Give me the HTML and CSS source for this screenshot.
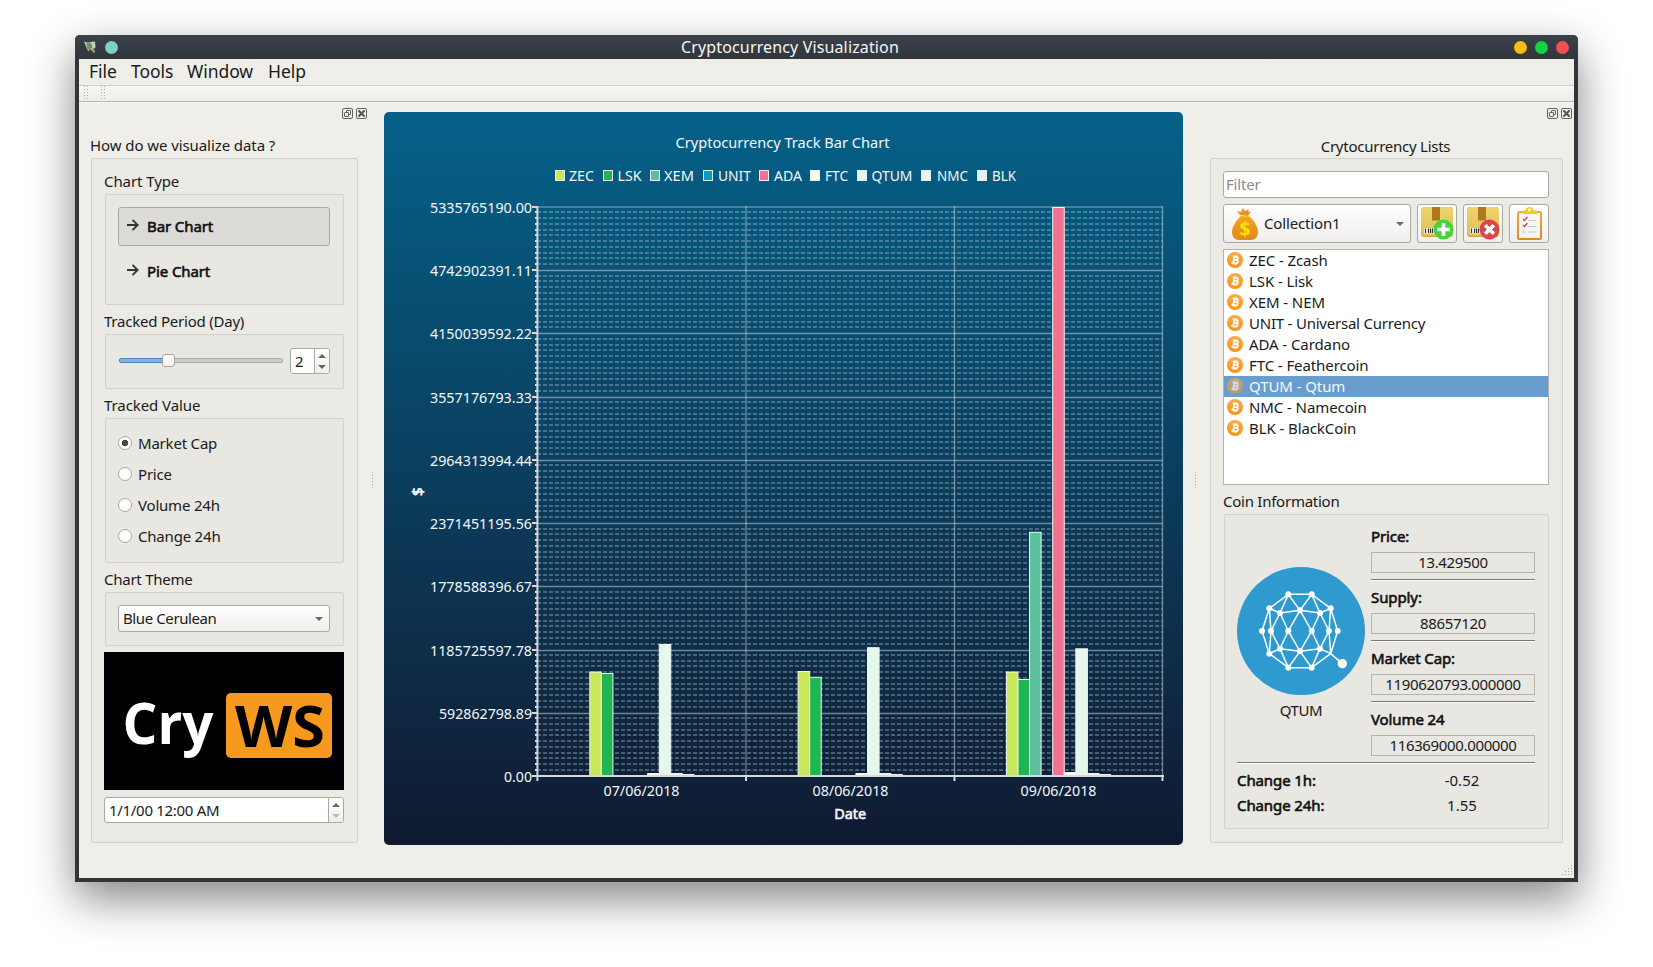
FILE: index.html
```html
<!DOCTYPE html>
<html lang="en">
<head>
<meta charset="utf-8">
<title>Cryptocurrency Visualization</title>
<link rel="stylesheet" href="styles.css">
</head>
<body>
<svg class="defs" width="0" height="0">
  <defs>
    <linearGradient id="coinFill" x1="0" y1="0" x2="0" y2="1"><stop offset="0" stop-color="#f9aa4b"/><stop offset="1" stop-color="#f7931a"/></linearGradient>
    <linearGradient id="boxFill" x1="0" y1="0" x2="0" y2="1"><stop offset="0" stop-color="#efd56f"/><stop offset="1" stop-color="#dfbe4f"/></linearGradient>
    <linearGradient id="bagFill" x1="0" y1="0" x2="0" y2="1"><stop offset="0" stop-color="#f6a326"/><stop offset="1" stop-color="#dd8b1a"/></linearGradient>
    <linearGradient id="boardFill" x1="0" y1="0" x2="0" y2="1"><stop offset="0" stop-color="#f5a93c"/><stop offset="1" stop-color="#dd8a1c"/></linearGradient>
    <symbol id="coin" viewBox="0 0 16 16">
      <circle cx="8" cy="8" r="8" fill="url(#coinFill)"/>
      <g transform="rotate(12 8 8)" fill="none" stroke="#fff" stroke-width="1.8"><path d="M5 4.8h4a1.5 1.5 0 0 1 0 3H6.8M6.8 4.8v6.400M5 11.200h4.400a1.700 1.700 0 0 0 0-3.400"/><path stroke-width="1" d="M7.300 3v1.600M9.200 3v1.600M7.300 11.400v1.600M9.200 11.400v1.600"/></g>
    </symbol>
    <symbol id="package" viewBox="0 0 32 32">
      <rect width="32" height="30" rx="3.5" fill="#c9a53c"/><rect width="32" height="29" rx="3.5" fill="url(#boxFill)"/>
      <path d="M11 0h8v14l-1.300-1-1.300 1-1.300-1-1.300 1-1.400-1-1.400 1z" fill="#b0781c"/>
      <rect x="3" y="21" width="12" height="5.500" fill="#fff" opacity=".85"/>
      <path d="M4.500 21.500v4.500M7.500 21.500v4.500M9.500 21.500v4.500M11.500 21.500v4.500" stroke="#333" stroke-width="1.200"/>
    </symbol>
    <symbol id="floatDock" viewBox="0 0 11 11"><rect x=".5" y=".5" width="10" height="10" rx="1.500" fill="none" stroke="#64645f"/><rect x="4.500" y="2.500" width="4" height="4" rx=".5" fill="none" stroke="#64645f"/><rect x="2.500" y="4.500" width="4" height="4" rx=".5" fill="#efeee9" stroke="#64645f"/></symbol>
    <symbol id="closeDock" viewBox="0 0 11 11"><rect x=".5" y=".5" width="10" height="10" rx="1.500" fill="none" stroke="#64645f"/><path d="M2.500 2.500l6 6M8.500 2.500l-6 6" stroke="#55554f" stroke-width="2"/></symbol>
    <symbol id="arrow" viewBox="0 0 12 12"><path d="M0 6h11M5.500 .8l5.200 5.200-5.200 5.200" fill="none" stroke="#31363b" stroke-width="1.900"/></symbol>
  </defs>
</svg>

<div class="window">
  <header class="titlebar">
    <div class="title-left">
      <svg width="12" height="12" viewBox="0 0 12 12"><path d="M0 .5l3 1 3-.5 5-.5.500 6-1.500 1 1 3.500-2-1-2-2-3 2z" fill="#c9cdbf"/><path d="M2.500 2l3.500-1 2 4-2 4-2.500-1z" fill="#5f9a6a"/><path d="M6.500 3l1.500 4M9 7l1 3.500" stroke="#6d6d60" stroke-width="1"/><path d="M7 8.500l2 1.500 1.500 1.500" stroke="#d98a3c" stroke-width="1.500"/></svg>
      <i class="dot teal"></i>
    </div>
    <span class="title">Cryptocurrency Visualization</span>
    <div class="title-right"><i class="dot amber"></i><i class="dot green"></i><i class="dot red"></i></div>
  </header>
  <nav class="menu"><span>File</span><span>Tools</span><span>Window</span><span>Help</span></nav>
  <div class="toolbar"><i class="grip"></i><i class="grip"></i></div>

  <main class="main">
    <section class="left">
      <div class="dock"><svg width="11" height="11"><use href="#floatDock"/></svg><svg width="11" height="11"><use href="#closeDock"/></svg></div>
      <div class="label head">How do we visualize data ?</div>
      <div class="group outer">
        <div class="label">Chart Type</div>
        <div class="group inner type-box">
          <button class="choice active"><svg width="12" height="12"><use href="#arrow"/></svg><span>Bar Chart</span></button>
          <button class="choice"><svg width="12" height="12"><use href="#arrow"/></svg><span>Pie Chart</span></button>
        </div>
        <div class="label period-label">Tracked Period (Day)</div>
        <div class="group inner period-box">
          <div class="slider"><i class="fill"></i><i class="handle"></i><i class="rest"></i></div>
          <div class="spin small"><span>2</span><div class="steps"><i class="up"></i><i class="down"></i></div></div>
        </div>
        <div class="label">Tracked Value</div>
        <div class="group inner value-box">
          <div class="radio on"><i></i>Market Cap</div>
          <div class="radio"><i></i>Price</div>
          <div class="radio"><i></i>Volume 24h</div>
          <div class="radio"><i></i>Change 24h</div>
        </div>
        <div class="label theme-label">Chart Theme</div>
        <div class="group inner theme-box"><div class="combo"><span>Blue Cerulean</span><i class="down"></i></div></div>
        <div class="brand"><svg width="240" height="138"><text class="brand-text" x="18.500" y="92" fill="#fff" textLength="91" lengthAdjust="spacingAndGlyphs">Cry</text><rect x="122" y="41" width="106" height="65" rx="5" fill="#f7981f"/><text class="brand-text" x="131" y="95" textLength="90" lengthAdjust="spacingAndGlyphs">WS</text></svg></div>
        <div class="spin date"><span>1/1/00 12:00 AM</span><div class="steps"><i class="up"></i><i class="down off"></i></div></div>
      </div>
      <i class="split"></i>
    </section>

    <section class="chart"><svg id="chart" width="799" height="733" viewBox="384 112 799 733"></svg></section>

    <section class="right">
      <div class="dock"><svg width="11" height="11"><use href="#floatDock"/></svg><svg width="11" height="11"><use href="#closeDock"/></svg></div>
      <div class="label list-head">Crytocurrency Lists</div>
      <div class="group outer">
        <div class="filter">Filter</div>
        <div class="actions">
          <div class="combo collection">
            <svg width="26" height="32" viewBox="0 0 26 32"><path d="M8 7L5 3l4 1 2-4 2 3 4-2-1 3 3-1-3 5z" fill="#e8912a"/><path d="M9 8h8c5 4 9 11 9 16 0 5-3 8-7 8H7c-4 0-7-3-7-8 0-5 4-12 9-16z" fill="url(#bagFill)"/><path d="M8 8.500h9" stroke="#f9c12c" stroke-width="1.500"/><text class="bag-sign" x="13" y="27.500" text-anchor="middle">$</text></svg>
            <span>Collection1</span><i class="down"></i>
          </div>
          <button class="tool"><svg width="33" height="33" viewBox="0 0 33 33"><use href="#package" width="32" height="32"/><circle cx="22.500" cy="22.500" r="10" fill="#45d33b"/><path d="M22.500 16v13M16 22.500h13" stroke="#fff" stroke-width="3.600"/></svg></button>
          <button class="tool"><svg width="33" height="33" viewBox="0 0 33 33"><use href="#package" width="32" height="32"/><circle cx="22.500" cy="22.500" r="10" fill="#e2434b"/><path d="M18.200 18.200l8.600 8.600M26.800 18.200l-8.600 8.600" stroke="#fff" stroke-width="3.600"/></svg></button>
          <button class="tool"><svg width="25" height="33" viewBox="0 0 25 33"><rect x="0" y="4" width="25" height="29" rx="2.500" fill="url(#boardFill)"/><rect x="2" y="6" width="21" height="25" fill="#f6f6f6"/><path d="M5 7q0-4 4-4a3.500 3 0 0 1 7 0q4 0 4 4z" fill="#f7cb15"/><circle cx="12.500" cy="3" r="1.400" fill="#fff"/><g fill="none"><path d="M6 12l1.500 1.500 3-3.500M6 18l1.500 1.500 3-3.500" stroke="#e23b45" stroke-width="1.300"/><path d="M11 13.500h8.500M11 19.500h8.500M11 25h8.500" stroke="#c8c8c8" stroke-width="1.200"/><rect x="6" y="24" width="2" height="2" stroke="#ccc" stroke-width=".8"/></g></svg></button>
        </div>
        <ul class="coins">
          <li><svg width="16" height="16"><use href="#coin"/></svg><span>ZEC - Zcash</span></li>
          <li><svg width="16" height="16"><use href="#coin"/></svg><span>LSK - Lisk</span></li>
          <li><svg width="16" height="16"><use href="#coin"/></svg><span>XEM - NEM</span></li>
          <li><svg width="16" height="16"><use href="#coin"/></svg><span class="long">UNIT - Universal Currency</span></li>
          <li><svg width="16" height="16"><use href="#coin"/></svg><span>ADA - Cardano</span></li>
          <li><svg width="16" height="16"><use href="#coin"/></svg><span>FTC - Feathercoin</span></li>
          <li class="sel"><svg width="16" height="16"><use href="#coin"/></svg><span>QTUM - Qtum</span></li>
          <li><svg width="16" height="16"><use href="#coin"/></svg><span>NMC - Namecoin</span></li>
          <li><svg width="16" height="16"><use href="#coin"/></svg><span>BLK - BlackCoin</span></li>
        </ul>
        <div class="label info-label">Coin Information</div>
        <div class="group inner info">
          <div class="info-top">
            <div class="logo">
              <svg width="128" height="128" viewBox="0 0 384 384">
                <circle cx="192" cy="192" r="192" fill="#2e9ad0"/>
                <g fill="none" stroke="#fff" stroke-width="4.500" stroke-linejoin="round">
                  <path d="M281 260l-57 42h-70l-57-42-22-68 22-68 57-42h70l57 42 21 68-21 68"/>
                  <path d="M97 124l32 14 60-8 60 8 32-14M97 260l32-15 60 8 60-8 32 15M97 124l5 68-5 68M281 124l-5 68 5 68"/>
                  <path d="M154 82l-25 56 25 54-25 53 25 57 35-49 35 49 25-57-25-53 25-54-25-56-35 48z"/>
                  <path d="M189 130l-35 62 35 61 35-61zM129 138l-27 54 27 53M249 138l27 54-27 53M281 260l35 30"/>
                </g>
                <g fill="#fff"><circle cx="154" cy="82" r="9"/><circle cx="224" cy="82" r="9"/><circle cx="97" cy="124" r="9"/><circle cx="281" cy="124" r="9"/><circle cx="129" cy="138" r="9"/><circle cx="189" cy="130" r="9"/><circle cx="249" cy="138" r="9"/><circle cx="75" cy="192" r="9"/><circle cx="102" cy="192" r="9"/><circle cx="154" cy="192" r="9"/><circle cx="224" cy="192" r="9"/><circle cx="276" cy="192" r="9"/><circle cx="302" cy="192" r="9"/><circle cx="97" cy="260" r="9"/><circle cx="129" cy="245" r="9"/><circle cx="189" cy="253" r="9"/><circle cx="249" cy="245" r="9"/><circle cx="154" cy="302" r="9"/><circle cx="224" cy="302" r="9"/><circle cx="316" cy="290" r="14"/></g>
              </svg>
              <span>QTUM</span>
            </div>
            <div class="facts">
              <b>Price:</b><div class="field">13.429500</div><hr>
              <b>Supply:</b><div class="field">88657120</div><hr>
              <b>Market Cap:</b><div class="field">1190620793.000000</div><hr>
              <b>Volume 24</b><div class="field">116369000.000000</div>
            </div>
          </div>
          <hr>
          <div class="change"><b>Change 1h:</b><span>-0.52</span></div>
          <div class="change"><b>Change 24h:</b><span>1.55</span></div>
        </div>
      </div>
      <i class="split"></i>
      <svg class="resize" width="12" height="12"><path d="M10 .5h1M7 3.500h1M10 3.500h1M4 6.500h1M7 6.500h1M10 6.500h1M1 9.500h1M4 9.500h1M7 9.500h1M10 9.500h1" stroke="#a9a9a5"/></svg>
    </section>
  </main>
</div>
<script src="chart.js"></script>
</body>
</html>
```
FILE: styles.css
```css
* { box-sizing: border-box; }
body { margin: 0; padding: 35px 75px; height: 967px; overflow: hidden; background: #fff; font: 15px/20px "Noto Sans", sans-serif; color: #1a1a1a; }
.defs { position: absolute; }
svg { display: block; flex: none; }
button { font: inherit; color: inherit; }

.window { width: 1503px; height: 847px; padding: 0 4px 4px; background: #31363b; border-radius: 5px 5px 0 0; box-shadow: 0 17px 45px rgba(0,0,0,.48); }
.titlebar { height: 24px; margin: 0 -4px; padding: 0 9px; display: flex; justify-content: space-between; align-items: center; background: linear-gradient(#3a4149, #31363b); border-radius: 5px 5px 0 0; color: #f5f5f5; }
.title { flex: 1; padding-right: 52px; text-align: center; font-size: 16px; letter-spacing: .14px; }
.title-left { display: flex; gap: 9px; align-items: center; }
.title-right { display: flex; gap: 8px; justify-content: flex-end; }
.dot { width: 13px; height: 13px; border-radius: 50%; }
.teal { background: #7ecfc8; }
.amber { background: #fdbc0b; }
.green { background: #14d140; }
.red { background: #f45056; }

.menu { height: 26px; padding-left: 10px; background: #efeee9; display: grid; grid-template-columns: 42px 56px 81px auto; justify-content: start; font-size: 17.5px; line-height: 25px; letter-spacing: -.05px; }
.toolbar { height: 17px; padding: 0 5px; display: flex; gap: 13px; background: linear-gradient(#f8f7f3, #edece7); border-top: 1px solid #cfcecb; border-bottom: 1px solid #b5b4b0; box-shadow: 0 1px #f8f8f4; position: relative; }
.grip { width: 4px; height: 15px; background-image: radial-gradient(circle at .5px .5px, #b0b0ac .7px, transparent .8px); background-size: 3px 3px; }
.main { height: 776px; padding-top: 1px; display: grid; grid-template-columns: 305px 799px 391px; background: #efeee9; }
.left { position: relative; padding: 5px 26px 0 12px; }
.right { position: relative; padding: 5px 11px 0 27px; }
.dock { display: flex; gap: 3px; justify-content: flex-end; margin-bottom: 16px; }
.left .dock { margin-right: -9px; }
.right .dock { margin: 0 -9px 17px 0; }
.label { height: 20px; margin-bottom: 3px; white-space: nowrap; letter-spacing: -.08px; }
.head { margin-left: -1px; }
.period-label { letter-spacing: -.22px; }
.theme-label, .info-label, .list-head { letter-spacing: -.25px; }
.list-head { text-align: center; margin: 0 2px 2px 0; }
.group { border: 1px solid #d2d1cc; border-radius: 2px; box-shadow: inset 0 0 1px rgba(0,0,0,.08); }
.outer { height: 685px; padding: 12px 13px 12px 12px; background: #ebeae5; }
.inner { margin: 0 0 6px 1px; padding: 12px; background: #e8e7e2; }
.type-box { height: 111px; }
.choice { width: 212px; height: 39px; padding: 0 8px; display: flex; gap: 8px; align-items: center; border: 1px solid transparent; border-radius: 3px; background: none; margin-bottom: 6px; }
.choice svg { margin-top: -3px; }
.choice span { margin-top: -2px; }
.choice span, b { font-weight: 400; color: #111; letter-spacing: -.1px; -webkit-text-stroke: .6px #111; }
.choice.active { background: #dcdbd7; border-color: #a9a8a4; }

.period-box { height: 55px; padding: 13px; display: flex; justify-content: space-between; }
.slider { display: flex; align-items: center; height: 25px; width: 164px; }
.fill { width: 44px; height: 5px; border: 1px solid #5484b5; background: #7db3e6; border-radius: 2px 0 0 2px; }
.handle { width: 13px; height: 13px; border: 1px solid #a5a4a0; border-radius: 3px; background: linear-gradient(#fff, #f2f1ee); margin: 0 -1px; }
.rest { flex: 1; height: 5px; border: 1px solid #aaa9a5; background: #cfcecb; border-radius: 0 2px 2px 0; }
.spin { height: 26px; display: flex; background: #fff; border: 1px solid #a9a8a4; border-radius: 3px; overflow: hidden; }
.spin span { flex: 1; padding: 2px 4px; line-height: 20px; letter-spacing: -.3px; }
.small { width: 40px; }
.steps { width: 15px; border-left: 1px solid #a9a8a4; background: linear-gradient(#fff, #efeeeb); display: flex; flex-direction: column; align-items: center; justify-content: center; gap: 7px; }
.up { border: 4px solid transparent; border-top: 0; border-bottom: 4px solid #666; }
.down { border: 4px solid transparent; border-bottom: 0; border-top: 4px solid #666; }
.off { border-top-color: #bbb; }

.value-box { height: 145px; padding-top: 14px; display: flex; flex-direction: column; gap: 11px; }
.radio { height: 20px; display: flex; align-items: center; gap: 6px; letter-spacing: -.2px; }
.radio i { width: 14px; height: 14px; border: 1px solid #a9a8a4; border-radius: 50%; background: #fff; margin-top: -1px; }
.radio.on i { background: radial-gradient(circle, #484848 2.9px, #fff 3.6px); }
.theme-box { height: 54px; }
.combo { height: 27px; width: 212px; display: flex; align-items: center; justify-content: space-between; padding: 0 6px 0 4px; border: 1px solid #a9a8a4; border-radius: 3px; background: linear-gradient(#fff, #efeeeb); }
.combo span { margin-top: -2px; letter-spacing: -.4px; }
.brand { height: 138px; background: #000; margin-bottom: 7px; }
.brand-text { font: 700 57px "Open Sans", sans-serif; }
.split { position: absolute; top: 369px; width: 1px; height: 17px; background: repeating-linear-gradient(#aaa 0 1px, transparent 1px 3px); }
.left .split { left: 293px; }
.right .split { left: 12px; }

.chart { padding-top: 9px; }
.chart svg { border-radius: 5px; background: linear-gradient(#056189, #101a31); }
.chart text { font: 15px "Noto Sans", sans-serif; fill: #f4f8fa; }

.filter { height: 27px; padding: 2px; border: 1px solid #a9a8a4; border-radius: 3px; background: #fff; color: #8c8c8c; line-height: 20px; letter-spacing: -.2px; }
.actions { display: grid; grid-template-columns: 188px 40px 40px 40px; gap: 6px; margin: 6px 0; }
.collection { width: 188px; height: 39px; padding-left: 8px; }
.collection span { flex: 1; margin-left: 6px; letter-spacing: -.15px; }
.bag-sign { font: 700 19px "Noto Sans", sans-serif; fill: #ffe000; }
.tool { height: 39px; padding: 0; display: flex; align-items: center; justify-content: center; border: 1px solid #a9a8a4; border-radius: 3px; background: linear-gradient(#fff, #efeeeb); }
.coins { height: 236px; margin: 0 0 6px; padding: 0; list-style: none; background: #fff; border: 1px solid #b4b3af; }
.coins li { height: 21px; padding-left: 3px; display: flex; align-items: flex-start; gap: 6px; white-space: nowrap; letter-spacing: -.09px; }
.coins svg { margin-top: 2px; }
.coins .long { letter-spacing: -.22px; }
.coins .sel { background: #689dce; color: #f4f8fc; }
.sel svg { opacity: .68; filter: saturate(.75); }
.info { height: 315px; padding: 11px 13px 0 12px; margin-bottom: 0; }
.info-top { display: grid; grid-template-columns: 128px 164px; gap: 6px; margin-bottom: 6px; }
.logo { padding-top: 41px; text-align: center; }
.logo span { display: block; margin-top: 5px; letter-spacing: -.4px; }
.facts { display: flex; flex-direction: column; gap: 6px; }
.field { height: 21px; border: 1px solid #b4b3af; text-align: center; line-height: 18px; letter-spacing: -.35px; }
hr { width: 100%; height: 2px; margin: 0; border: 0; border-top: 1px solid #777672; border-bottom: 1px solid #fff; }
.info > hr { margin-bottom: 6px; }
.change { height: 25px; display: grid; grid-template-columns: 152px 146px; }
.change span { text-align: center; }
.resize { position: absolute; right: 1px; bottom: 1px; }
```
FILE: chart.js
```js
(function () {
const svg = document.getElementById('chart');
const NS = 'http://www.w3.org/2000/svg';
function add(tag, attrs, text) {
  const el = document.createElementNS(NS, tag);
  for (const k in attrs) el.setAttribute(k, attrs[k]);
  if (text) el.textContent = text;
  svg.appendChild(el);
}
function label(x, y, width, text, extra) {
  add('text', Object.assign({ x, y, textLength: width, lengthAdjust: 'spacingAndGlyphs' }, extra), text);
}
const x0 = 537, x1 = 1162.5, y0 = 207, y1 = 776;
const major = (y1 - y0) / 9, column = 208.3;
const grid = '#d6dfe2';

label(675.5, 148, 214, 'Cryptocurrency Track Bar Chart');

// Legend
[['ZEC', 555, 569, 25, '#c8e85a'], ['LSK', 603, 617.5, 24, '#1fb552'], ['XEM', 650, 664, 30, '#5cc09c'],
 ['UNIT', 703, 718, 33, '#00a0c6'], ['ADA', 759, 774, 28, '#f07190'], ['FTC', 810, 825, 23, '#fbfbea'],
 ['QTUM', 857, 871.5, 41, '#e6f7ec'], ['NMC', 921, 937, 31, '#eff5f6'], ['BLK', 977, 992, 24, '#e2f2fb']
].forEach(([name, bx, tx, w, fill]) => {
  add('rect', { x: bx + .5, y: 170.5, width: 9, height: 10, fill, stroke: '#e8f0ee' });
  label(tx, 181, w, name);
});

// Grid
for (let i = 0; i < 9; i++) {
  for (let j = 1; j < 11; j++) {
    const y = Math.round(y0 + i * major + j * major / 11 - .3);
    add('path', { d: `M${x0} ${y}H${x1}`, stroke: grid, 'stroke-opacity': .31, 'stroke-width': 2, 'stroke-dasharray': '4 2' });
    add('path', { d: `M535 ${y}h2`, stroke: '#d6d8dc', 'stroke-width': 2 });
  }
}
['5335765190.00', '4742902391.11', '4150039592.22', '3557176793.33', '2964313994.44', '2371451195.56', '1778588396.67', '1185725597.78', '592862798.89', '0.00'].forEach((t, i) => {
  const y = y0 + i * major, w = t.length === 13 ? 102 : t.length === 12 ? 93 : 28;
  if (i < 9) add('path', { d: `M${x0} ${i ? Math.round(y) + .5 : y}H${x1}`, stroke: grid, 'stroke-opacity': i ? .5 : .31, 'stroke-width': i ? 1.3 : 2 });
  add('path', { d: `M532 ${Math.round(y)}h5`, stroke: '#d6d8dc', 'stroke-width': 2 });
  label(532 - w, Math.round(y + 6), w, t);
});
add('path', { d: 'M746 206V776', stroke: grid, 'stroke-opacity': .31, 'stroke-width': 2 });
add('path', { d: 'M954.5 206V776M1162.5 206V776', stroke: grid, 'stroke-opacity': .5, 'stroke-width': 1.3 });

// Bars per day: [series index, top edge]
const fills = ['#c8e85a', '#1fb552', '#5cc09c', '#00a0c6', '#f07190', '#fbfbea', '#e6f7ec', '#eff5f6', '#e2f2fb'];
[[[0, 672], [1, 673.5], [3, 775.6], [5, 773.5], [6, 644.5], [7, 773.5], [8, 774.5]],
 [[0, 671.5], [1, 677.3], [3, 775.6], [5, 773.5], [6, 647.7], [7, 773.5], [8, 774.5]],
 [[0, 672], [1, 679.5], [2, 532.3], [3, 775.6], [4, 207.5], [5, 772.5], [6, 648.8], [7, 773.5], [8, 774.5]]
].forEach((group, g) => group.forEach(([slot, y]) => {
  add('rect', { x: 589.8 + g * column + slot * 11.57, y, width: 11.57, height: 776 - y, fill: fills[slot], stroke: '#f0f6f0', 'stroke-width': 1 });
}));

// Axes
add('path', { d: 'M537.4 206V781', stroke: '#d6d8dc', 'stroke-width': 2 });
add('path', { d: 'M532 776H1164', stroke: '#d6d8dc', 'stroke-width': 2 });
add('path', { d: 'M746 776v5M954.5 776v5M1162.5 776v5', stroke: '#d6d8dc', 'stroke-width': 2 });
label(603.5, 796, 76, '07/06/2018');
label(812.5, 796, 76, '08/06/2018');
label(1020.5, 796, 76, '09/06/2018');
label(834.2, 818.5, 32, 'Date', { style: 'stroke:#f4f8fa;stroke-width:.6px' });
add('text', { x: 0, y: 0, transform: 'translate(422.5 496) rotate(-90)', style: 'font-size:15px;stroke:#fff;stroke-width:.7px' }, '$');
})();
```
